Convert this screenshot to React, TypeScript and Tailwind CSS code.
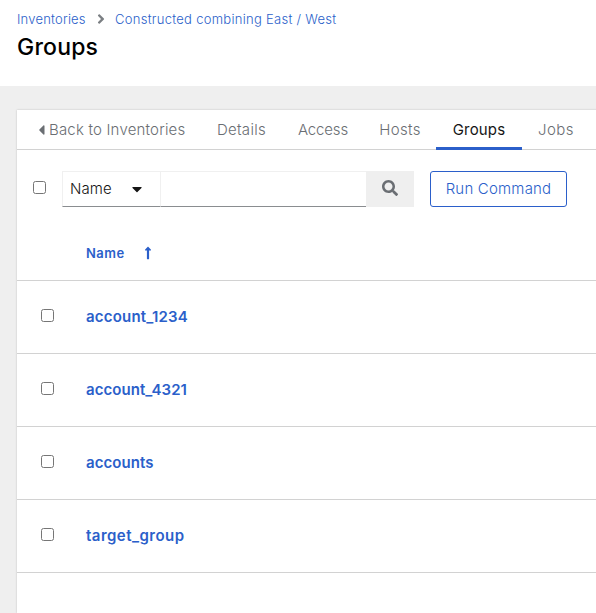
import { FaAngleRight, FaCaretDown, FaCaretLeft, FaLongArrowAltUp, FaSearch } from 'react-icons/fa';

const tabs = [
  { label: 'Details', width: 'w-[81px]', spacing: 'tracking-[0.3px]' },
  { label: 'Access', width: 'w-[82px]', spacing: 'tracking-[-0.15px]' },
  { label: 'Hosts', width: 'w-[72px]', spacing: 'tracking-[0.35px]' },
  { label: 'Groups', width: 'w-[86px]', spacing: 'tracking-[0.15px]', active: true },
  { label: 'Jobs', width: 'w-[68px]', spacing: 'tracking-[0.4px]' },
];

const groups = [
  { name: 'account_1234', spacing: 'tracking-[0.2px]' },
  { name: 'account_4321', spacing: 'tracking-[0.06px]' },
  { name: 'accounts', spacing: 'tracking-[0.06px]' },
  { name: 'target_group', spacing: 'tracking-[0.47px]' },
];

export default function App() {
  return (
    <div className="flex h-[613px] w-[596px] flex-col overflow-hidden bg-[#efefef] font-['Inter','Liberation_Sans',sans-serif] text-[#151515]">
      <header className="h-[86px] shrink-0 bg-white pl-[17px] pt-[9px]">
        <nav className="flex h-[20px] items-center whitespace-nowrap text-[13px] font-[350] text-[#2b5fca]">
          <a className="w-[80px] pt-[2px] tracking-[0.2px]">Inventories</a>
          <FaAngleRight viewBox="24 90 208 332" className="mr-[10px] h-[10px] w-[8px] shrink-0 text-[#7b7f83]" />
          <a className="pt-[2px] tracking-[0.28px]">Constructed combining East / West</a>
        </nav>
        <h1 className="mt-[2px] h-[32px] text-[23px] font-medium leading-[32px] tracking-[0.2px] text-black">Groups</h1>
      </header>

      <main className="ml-[17px] mt-[24px] w-[600px] grow bg-white shadow-[0_0_2px_rgba(3,3,3,0.2)]">
        <nav className="flex h-[40px] whitespace-nowrap border-b border-[#d2d2d2] text-[15px] font-light text-[#6a6e73]">
          <a className="flex h-[40px] w-[184px] shrink-0 items-center pl-[20px] tracking-[0.19px]">
            <FaCaretLeft className="mr-[3px] h-[16px] w-[9px] shrink-0" />
            Back to Inventories
          </a>
          {tabs.map((tab) => (
            <a
              key={tab.label}
              className={`${tab.width} ${tab.spacing} flex h-[40px] shrink-0 items-center justify-center ${
                tab.active ? 'border-b-[3px] border-[#2b5fca] pt-[3px] font-normal text-[#151515]' : ''
              }`}
            >
              {tab.label}
            </a>
          ))}
        </nav>

        <section className="flex h-[57px] pl-[16px] pt-[21px]">
          <input type="checkbox" aria-label="Select all" className="mt-[10px] h-[13px] w-[13px] shrink-0" />
          <div className="ml-[16px] flex h-[36px] w-[99px] shrink-0 items-center justify-between border border-[#f0f0f0] border-b-[#8a8d90] pl-[7px] pr-[18px]">
            <span className="text-[15px] font-[350] tracking-[0.1px]">Name</span>
            <FaCaretDown className="h-[16px] w-[10px]" />
          </div>
          <input
            aria-label="Search"
            className="h-[36px] w-[205px] shrink-0 border-b border-t border-b-[#8a8d90] border-t-[#f0f0f0]"
          />
          <button className="flex h-[36px] w-[48px] shrink-0 items-center justify-center bg-[#efefef] pb-[2px] text-[#6a6e73]" aria-label="Search">
            <FaSearch className="h-[16px] w-[16px]" />
          </button>
          <button className="ml-[16px] h-[36px] w-[137px] shrink-0 whitespace-nowrap rounded-[3px] border border-[#2b5fca] text-[15px] font-[350] tracking-[0.2px] text-[#2b5fca]">
            Run Command
          </button>
        </section>

        <div className="flex h-[74px] items-center border-b border-[#d2d2d2] pl-[69px] pt-[19px] text-[13px] font-semibold text-[#2b5fca]">
          <span className="w-[58px] pt-[2px] tracking-[0.5px]">Name</span>
          <FaLongArrowAltUp className="h-[14px] w-[8px]" />
        </div>

        {groups.map((group) => (
          <div key={group.name} className="flex h-[73px] items-center border-b border-[#d2d2d2] pl-[24px]">
            <input type="checkbox" aria-label={group.name} className="mb-[3px] h-[13px] w-[13px]" />
            <a className={`${group.spacing} ml-[32px] text-[15px] font-semibold text-[#2b5fca]`}>{group.name}</a>
          </div>
        ))}
      </main>
    </div>
  );
}
